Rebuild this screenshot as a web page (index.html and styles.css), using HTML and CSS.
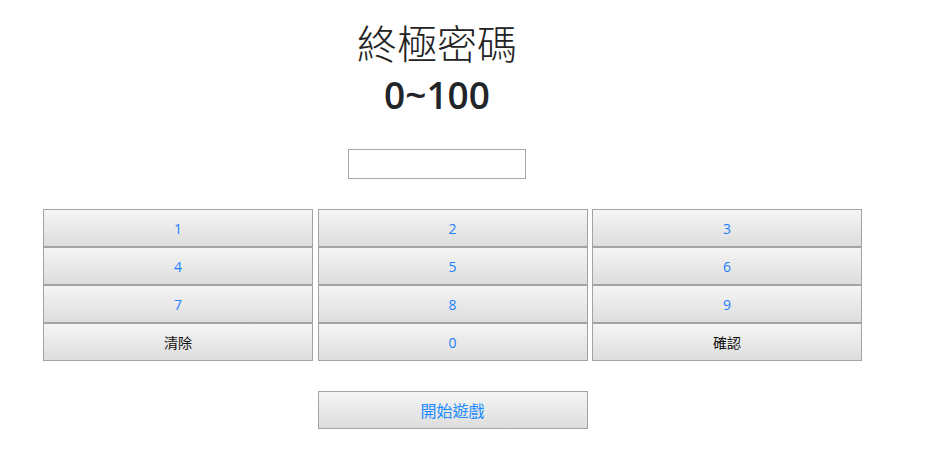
FILE: index.html
```html
<!DOCTYPE html>
<html lang="zh-Hant">
<head>
<meta charset="utf-8">
<title>終極密碼</title>
<link rel="stylesheet" href="styles.css">
</head>
<body>
<div class="header">
  <h1 class="title">終極密碼</h1>
  <h2 class="range">0~100</h2>
  <input class="guess" type="text">
</div>
<div class="pad">
  <button class="key">1</button>
  <button class="key">2</button>
  <button class="key">3</button>
  <button class="key">4</button>
  <button class="key">5</button>
  <button class="key">6</button>
  <button class="key">7</button>
  <button class="key">8</button>
  <button class="key">9</button>
  <button class="key dark">清除</button>
  <button class="key">0</button>
  <button class="key dark">確認</button>
</div>
<div class="start-row">
  <button class="key start">開始遊戲</button>
</div>
</body>
</html>
```
FILE: styles.css
```css
body {
  margin: 0;
  font-family: "Open Sans", "Noto Sans CJK TC", sans-serif;
}
.header {
  width: 874px;
  display: flex;
  flex-direction: column;
  align-items: center;
}
.title {
  margin: 16px 0 0;
  font-family: "Noto Sans CJK TC", serif;
  font-weight: 300;
  font-size: 40px;
  line-height: 52px;
  color: #222;
}
.range {
  margin: 5px 0 0;
  font-family: "Open Sans", sans-serif;
  font-weight: 600;
  font-size: 37px;
  line-height: 44px;
  color: #212529;
}
.guess {
  margin: 32px 0 0;
  width: 178px;
  height: 30px;
  box-sizing: border-box;
  border: 1px solid #a9a9a9;
  padding: 0 4px;
}
.pad {
  margin: 30px 0 0 43px;
  display: grid;
  grid-template-columns: 270px 270px 270px;
  column-gap: 4.5px;
  row-gap: 0;
  width: 819px;
}
.key {
  height: 38px;
  box-sizing: border-box;
  border: 1px solid #a3a3a3;
  background: linear-gradient(#f5f5f5, #dddddd);
  color: #1e7fff;
  font-family: "Open Sans", "Noto Sans CJK TC", sans-serif;
  font-size: 14px;
  padding: 0;
  margin: 0;
}
.key.dark {
  color: #111;
}
.start-row {
  width: 819px;
  margin: 30px 0 0 43px;
  display: flex;
  justify-content: center;
}
.start {
  width: 270px;
  font-size: 16px;
  color: #1a8cff;
}
```
